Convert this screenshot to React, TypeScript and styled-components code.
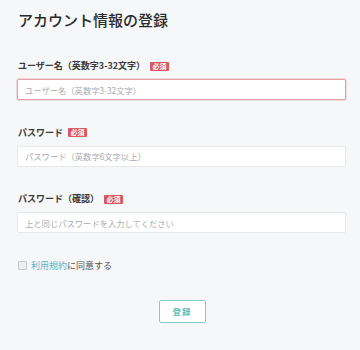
import React, { useState } from 'react';
import styled, { createGlobalStyle } from 'styled-components';

const GlobalStyle = createGlobalStyle`
  html, body {
    margin: 0;
    padding: 0;
    background: #f6f7f9;
  }
  body {
    font-family: "Noto Sans CJK JP", "Noto Sans", sans-serif;
    color: #333;
  }
`;

const Page = styled.div`
  width: 360px;
  height: 350px;
  box-sizing: border-box;
  padding: 10px 14px 0 17px;
  background: #f6f7f9;
`;

const Title = styled.h1`
  margin: 0 0 30px 1px;
  font-size: 15px;
  line-height: 20px;
  font-weight: 500;
  color: #2b2b2b;
`;

const Field = styled.div`
  display: flex;
  flex-direction: column;
  margin-bottom: 26.5px;
`;

const LabelRow = styled.div`
  display: flex;
  align-items: center;
  gap: 5px;
  height: 12px;
  margin: 0 0 7px 1px;
`;

const Label = styled.label`
  font-size: 9px;
  line-height: 12px;
  font-weight: 700;
  color: #3a3a3a;
`;

const Required = styled.span`
  display: inline-block;
  background: #d9585c;
  color: #fff;
  font-size: 7px;
  line-height: 9px;
  font-weight: 700;
  padding: 0 2.5px;
  border-radius: 1px;
`;

const Input = styled.input<{ $error?: boolean }>`
  box-sizing: border-box;
  width: 329px;
  height: 21px;
  padding: 0 7px;
  font-family: inherit;
  font-size: 8.3px;
  color: #333;
  background: #fff;
  border: 1px solid ${({ $error }) => ($error ? '#e6a1a6' : '#e7e8ea')};
  border-radius: 2px;
  box-shadow: ${({ $error }) => ($error ? '0 0 0 1px rgba(230, 161, 166, 0.35)' : 'none')};
  outline: none;
  &::placeholder {
    color: #a9acb0;
  }
`;

const AgreeRow = styled.label`
  display: flex;
  align-items: center;
  gap: 4px;
  height: 12px;
  margin: 24px 0 28px 1px;
  font-size: 9px;
  line-height: 12px;
  color: #555;
`;

const Box = styled.span`
  width: 7px;
  height: 7px;
  border: 1px solid #c6c8cc;
  border-radius: 1px;
  background: #eceef0;
`;

const TermsLink = styled.a`
  color: #5ab4c4;
  text-decoration: none;
`;

const Actions = styled.div`
  display: flex;
  justify-content: center;
  padding-left: 1px;
`;

const SubmitButton = styled.button`
  box-sizing: border-box;
  width: 47px;
  height: 23px;
  background: #fff;
  border: 1px solid #7fcdc6;
  border-radius: 2px;
  color: #5fbcb4;
  font-family: inherit;
  font-size: 8.5px;
  font-weight: 700;
  letter-spacing: 1px;
  cursor: pointer;
`;

const App: React.FC = () => {
  const [name, setName] = useState('');
  const [pass, setPass] = useState('');
  const [confirm, setConfirm] = useState('');

  return (
    <>
      <GlobalStyle />
      <Page>
        <Title>アカウント情報の登録</Title>

        <Field>
          <LabelRow>
            <Label>ユーザー名（英数字3-32文字）</Label>
            <Required>必須</Required>
          </LabelRow>
          <Input
            $error
            placeholder="ユーザー名（英数字3-32文字）"
            value={name}
            onChange={(e) => setName(e.target.value)}
          />
        </Field>

        <Field>
          <LabelRow>
            <Label>パスワード</Label>
            <Required>必須</Required>
          </LabelRow>
          <Input
            type="password"
            placeholder="パスワード（英数字6文字以上）"
            value={pass}
            onChange={(e) => setPass(e.target.value)}
          />
        </Field>

        <Field>
          <LabelRow>
            <Label>パスワード（確認）</Label>
            <Required>必須</Required>
          </LabelRow>
          <Input
            type="password"
            placeholder="上と同じパスワードを入力してください"
            value={confirm}
            onChange={(e) => setConfirm(e.target.value)}
          />
        </Field>

        <AgreeRow>
          <Box />
          <span>
            <TermsLink href="#">利用規約</TermsLink>に同意する
          </span>
        </AgreeRow>

        <Actions>
          <SubmitButton>登録</SubmitButton>
        </Actions>
      </Page>
    </>
  );
};

export default App;
